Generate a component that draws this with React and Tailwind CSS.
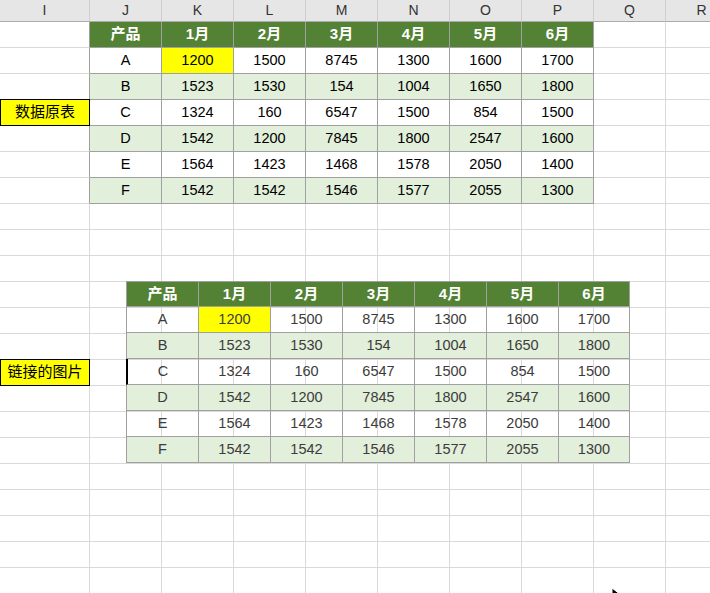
import React from 'react'

const font = { fontFamily: '"Liberation Sans", "Noto Sans CJK SC", sans-serif' }

const cols = ['I', 'J', 'K', 'L', 'M', 'N', 'O', 'P', 'Q', 'R']
const head = ['产品', '1月', '2月', '3月', '4月', '5月', '6月']
const data = [
  ['A', 1200, 1500, 8745, 1300, 1600, 1700],
  ['B', 1523, 1530, 154, 1004, 1650, 1800],
  ['C', 1324, 160, 6547, 1500, 854, 1500],
  ['D', 1542, 1200, 7845, 1800, 2547, 1600],
  ['E', 1564, 1423, 1468, 1578, 2050, 1400],
  ['F', 1542, 1542, 1546, 1577, 2055, 1300],
]

function tableCell(r, c, picture) {
  // r: 0 = header row, 1..6 = data rows; c: 0..6
  if (r === 0) {
    return { text: head[c], cls: 'bg-[#548235] text-white font-bold text-[15px]' }
  }
  const row = data[r - 1]
  const green = r % 2 === 0
  let cls = green ? 'bg-[#e2efda]' : picture ? 'bg-transparent' : 'bg-white'
  if (r === 1 && c === 1) cls = 'bg-[#ffff00]'
  return { text: row[c], cls: cls + (picture ? ' text-[#3c3c3c]' : ' text-black') + ' text-[14.5px]' }
}

function SheetCell({ r, c }) {
  const inTable = r <= 6 && c >= 1 && c <= 7
  if (inTable) {
    const t = tableCell(r, c - 1, false)
    return (
      <div className={`flex items-center justify-center border-r border-b border-[#a0a0a0] ${t.cls}`}>
        {t.text}
      </div>
    )
  }
  if (c === 0 && (r === 3 || r === 13)) {
    return (
      <div className="flex items-center justify-center border border-black bg-[#ffff00] text-[15px] text-black -mt-px">
        {r === 3 ? '数据原表' : '链接的图片'}
      </div>
    )
  }
  const edge = c === 0 && r <= 6 ? 'border-r-[#a0a0a0]' : ''
  return <div className={`border-r border-b border-[#d9d9d9] bg-white ${edge}`} />
}

function LinkedPicture() {
  return (
    <div className="absolute left-[126px] top-[281px] grid grid-cols-[73px_repeat(5,72px)_71px] grid-rows-[repeat(7,26px)]">
      {[0, 1, 2, 3, 4, 5, 6].map((r) =>
        [0, 1, 2, 3, 4, 5, 6].map((c) => {
          const t = tableCell(r, c, true)
          let b = 'border-r border-b border-[#a0a0a0]'
          if (c === 0) b += r === 3 ? ' border-l-2 border-l-black' : ' border-l'
          if (r === 0) b += ' border-t'
          return (
            <div key={`${r}-${c}`} className={`flex items-center justify-center ${b} ${t.cls}`}>
              {t.text}
            </div>
          )
        })
      )}
    </div>
  )
}

export default function App() {
  const rows = Array.from({ length: 22 }, (_, i) => i)
  return (
    <div className="relative w-[710px] h-[593px] overflow-hidden bg-white" style={font}>
      <div className="grid grid-cols-[90px_repeat(9,72px)] grid-rows-[22px_repeat(22,26px)] w-[738px]">
        {cols.map((l) => (
          <div
            key={l}
            className="flex items-center justify-center bg-[#e6e6e6] border-r border-b border-r-[#cfcfcf] border-b-[#ababab] text-[14px] text-[#333]"
          >
            {l}
          </div>
        ))}
        {rows.map((r) => cols.map((_, c) => <SheetCell key={`${r}-${c}`} r={r} c={c} />))}
      </div>

      <LinkedPicture />

      <svg className="absolute left-[611px] top-[587px]" width="10" height="14" viewBox="0 0 10 14">
        <path d="M1 1 L1 12 L4 9 L6 13 L8 12 L6 8 L10 8 Z" fill="#000" stroke="#fff" strokeWidth="1" />
      </svg>
    </div>
  )
}
